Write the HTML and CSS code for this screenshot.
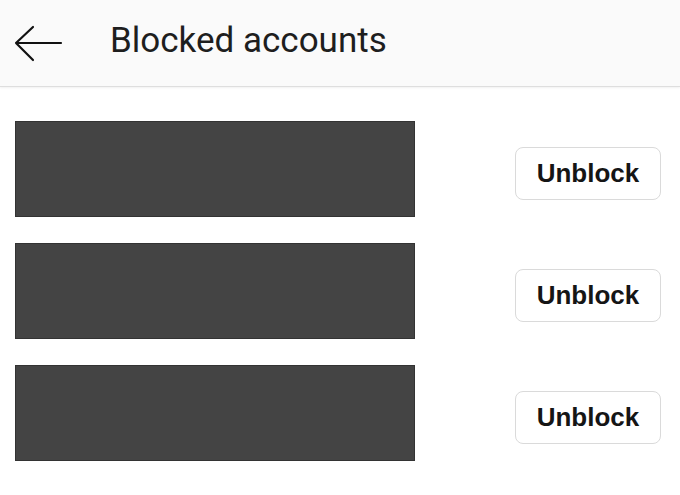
FILE: index.html
```html
<!DOCTYPE html>
<html lang="en">

<head>
    <meta charset="UTF-8">
    <title>Blocked accounts</title>
    <link rel="stylesheet" href="styles.css">
</head>

<body>
    <div class="header">
        <svg class="back-icon" viewBox="0 0 50 40" width="50" height="40">
            <path d="M2 19 H47 M2 19 L19 3 M2 19 L19 36" fill="none" stroke="#111" stroke-width="2.2" stroke-linecap="round" stroke-linejoin="round"/>
        </svg>
        <h1 class="title">Blocked accounts</h1>
    </div>

    <div class="account-list">
        <div class="account-row">
            <div class="account-hidden"></div>
            <button class="unblock-btn">Unblock</button>
        </div>
        <div class="account-row">
            <div class="account-hidden"></div>
            <button class="unblock-btn">Unblock</button>
        </div>
        <div class="account-row">
            <div class="account-hidden"></div>
            <button class="unblock-btn">Unblock</button>
        </div>
    </div>
</body>

</html>
```

FILE: styles.css
```css
body {
    margin: 0;
    background-color: #fff;
    font-family: Roboto, "Liberation Sans", sans-serif;
}

.header {
    display: flex;
    align-items: center;
    height: 86px;
    padding-left: 14px;
    background-color: #fafafa;
    border-bottom: 1px solid #dedede;
    box-shadow: 0 1px 2px rgba(0, 0, 0, 0.06);
}

.back-icon {
    display: block;
    margin-top: 1px;
}

.title {
    margin: 0 0 6px 46px;
    font-size: 35px;
    font-weight: 400;
    color: #1e1e1e;
}

.account-list {
    display: flex;
    flex-direction: column;
    gap: 26px;
    padding: 34px 19px 0 15px;
}

.account-row {
    display: flex;
    justify-content: space-between;
    align-items: flex-start;
}

.account-hidden {
    width: 398px;
    height: 94px;
    background-color: #444;
    border: 1px solid #333;
}

.unblock-btn {
    margin-top: 26px;
    width: 146px;
    height: 53px;
    background-color: #fff;
    border: 1.5px solid #dadada;
    border-radius: 8px;
    font-family: "Liberation Sans", Arial, sans-serif;
    font-size: 26px;
    font-weight: bold;
    color: #151515;
    cursor: pointer;
}
```
